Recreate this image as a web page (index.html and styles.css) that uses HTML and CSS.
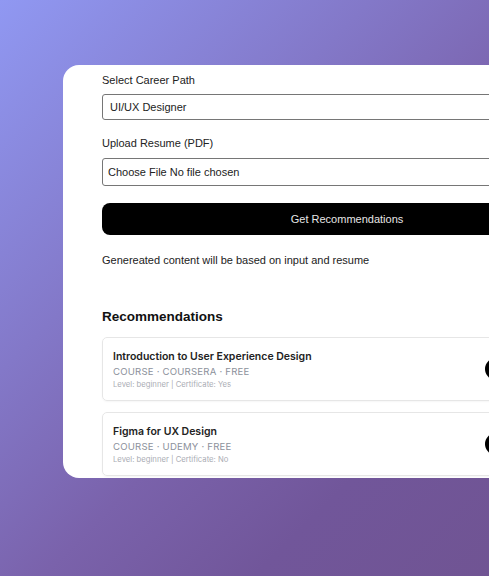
FILE: index.html
```html
<!DOCTYPE html>
<html>
<head>
<meta charset="utf-8">
<link rel="stylesheet" href="styles.css">
</head>
<body>
<div class="page">
  <div class="panel">
    <form class="form">
      <label class="label" for="career">Select Career Path</label>
      <select id="career" class="select">
        <option>UI/UX Designer</option>
      </select>
      <label class="label label-gap" for="resume">Upload Resume (PDF)</label>
      <div class="file-box">
        <input id="resume" class="file" type="file" accept="application/pdf">
      </div>
      <button type="button" class="submit">Get Recommendations</button>
      <p class="note">Genereated content will be based on input and resume</p>
    </form>

    <h2 class="heading">Recommendations</h2>
    <div class="rec-list">
      <div class="rec-item">
        <div class="rec-info">
          <div class="rec-title">Introduction to User Experience Design</div>
          <div class="rec-meta">COURSE · COURSERA · FREE</div>
          <div class="rec-sub">Level: beginner | Certificate: Yes</div>
        </div>
        <span class="rec-dot"></span>
      </div>
      <div class="rec-item">
        <div class="rec-info">
          <div class="rec-title">Figma for UX Design</div>
          <div class="rec-meta">COURSE · UDEMY · FREE</div>
          <div class="rec-sub">Level: beginner | Certificate: No</div>
        </div>
        <span class="rec-dot"></span>
      </div>
    </div>
  </div>
</div>
</body>
</html>
```

FILE: styles.css
```css
html, body {
  margin: 0;
  padding: 0;
  height: 100%;
}

body {
  overflow: hidden;
  background: linear-gradient(135deg, #9098f2 0%, #8378c8 35%, #7a62ab 58%, #71569a 78%, #705493 100%);
  font-family: "Liberation Sans", Arial, sans-serif;
  color: #222;
}

.page {
  padding: 65px 0 0 63px;
}

.panel {
  box-sizing: border-box;
  width: 568px;
  height: 413px;
  overflow: hidden;
  background: #fff;
  border-radius: 16px;
  padding: 8px 39px 0 39px;
}

.form {
  display: flex;
  flex-direction: column;
  margin: 0;
}

.label {
  font-size: 11px;
  line-height: 15px;
  color: #222;
  margin-bottom: 6px;
}

.label-gap {
  margin-top: 16px;
  margin-bottom: 7px;
}

.select {
  -webkit-appearance: none;
  appearance: none;
  box-sizing: border-box;
  height: 26px;
  width: 100%;
  border: 1px solid #767676;
  border-radius: 3px;
  background: #fff;
  padding: 0 7px;
  font-family: "Liberation Sans", Arial, sans-serif;
  font-size: 11px;
  color: #222;
}

.file-box {
  box-sizing: border-box;
  height: 28px;
  border: 1px solid #767676;
  border-radius: 3px;
  display: flex;
  align-items: center;
  padding: 0 5px;
}

.file {
  font-family: "Liberation Sans", Arial, sans-serif;
  font-size: 11px;
  color: #222;
}

.file::file-selector-button {
  background: none;
  border: none;
  padding: 0;
  margin: 0 3px 0 0;
  font-family: "Liberation Sans", Arial, sans-serif;
  font-size: 11px;
  color: #222;
}

.submit {
  margin-top: 17px;
  height: 32px;
  width: 100%;
  border: none;
  border-radius: 8px;
  background: #000;
  color: #e6e6e6;
  font-family: "Liberation Sans", Arial, sans-serif;
  font-size: 11px;
}

.note {
  margin: 18px 0 0 0;
  font-size: 11px;
  line-height: 15px;
  color: #222;
}

.heading {
  margin: 40px 0 0 0;
  font-size: 13.5px;
  line-height: 18px;
  font-weight: bold;
  color: #111;
}

.rec-list {
  margin-top: 11px;
  display: flex;
  flex-direction: column;
  gap: 11px;
}

.rec-item {
  box-sizing: border-box;
  height: 64px;
  display: flex;
  align-items: center;
  border: 1px solid #e6e6e6;
  border-radius: 5px;
  box-shadow: 0 1px 2px rgba(0, 0, 0, 0.04);
  padding: 0 10px;
  font-family: Inter, "Noto Sans", sans-serif;
}

.rec-info {
  width: 372px;
  display: flex;
  flex-direction: column;
  padding-top: 2px;
}

.rec-title {
  font-size: 10.5px;
  line-height: 15px;
  font-weight: 600;
  color: #222;
}

.rec-meta {
  font-size: 9.6px;
  line-height: 15px;
  color: #8c919b;
  letter-spacing: 0.2px;
}

.rec-sub {
  font-size: 7.7px;
  line-height: 12px;
  color: #aaadb4;
}

.rec-dot {
  flex: none;
  width: 22px;
  height: 22px;
  border-radius: 50%;
  background: #000;
}
```
